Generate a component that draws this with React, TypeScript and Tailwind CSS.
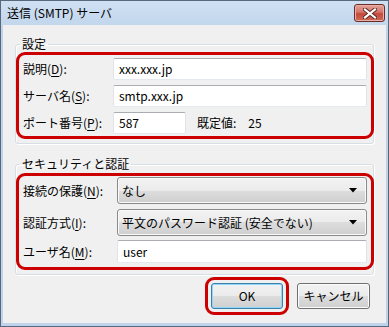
import React from "react";

const font = "font-['Noto_Sans_CJK_JP','Noto_Sans',sans-serif]";

function Mn({ label, k, rest = "" }: { label: string; k: string; rest?: string }) {
  return (
    <span>
      {label}(<span className="underline underline-offset-2">{k}</span>):{rest}
    </span>
  );
}

function TextBox({ value, className = "" }: { value: string; className?: string }) {
  return (
    <div
      className={`flex h-[22px] items-center rounded-[2px] border border-[#e2e3ea] border-t-[#abadb3] border-b-[#e3e9ef] bg-white pl-[5px] text-[12px] text-black ${className}`}
    >
      {value}
    </div>
  );
}

function Combo({ value }: { value: string }) {
  return (
    <div className="flex h-[27px] flex-1 items-center justify-between rounded-[3px] border border-[#8a8a8a] bg-[linear-gradient(#f2f2f2_0%,#ebebeb_50%,#dddddd_50%,#cfcfcf_100%)] pl-[4px] pr-[9px] text-[12px] text-black shadow-[inset_0_0_0_1px_#fafafa]">
      <span>{value}</span>
      <svg width="8" height="5" viewBox="0 0 8 5">
        <path d="M0 0H8L4 4.5Z" fill="#000" />
      </svg>
    </div>
  );
}

function Group({ title, children }: { title: string; children: React.ReactNode }) {
  return (
    <fieldset className="mx-[12px] rounded-[3px] border border-[#d5dfe5] pb-[4px] shadow-[inset_1px_1px_0_#fff,1px_1px_0_#fff]">
      <legend className="ml-[4px] px-[2px] text-[12px] leading-[16px] text-black">{title}</legend>
      {children}
    </fieldset>
  );
}

function Row({ label, children, w }: { label: React.ReactNode; children: React.ReactNode; w: string }) {
  return (
    <div className="flex items-center">
      <div className={`${w} shrink-0 text-[12px] text-black`}>{label}</div>
      {children}
    </div>
  );
}

export default function App() {
  return (
    <div className={`h-[327px] w-[389px] ${font}`}>
      <div className="flex h-[327px] w-[389px] flex-col border border-[#56687a] bg-[linear-gradient(#cfe0f2,#bfd4eb_30px,#bfd4eb)]">
        {/* title bar */}
        <div className="flex h-[24px] shrink-0 items-start justify-between">
          <div className="pl-[6px] pt-[5px] text-[12px] leading-[14px] text-black">送信 (SMTP) サーバ</div>
          <button className="mr-[3px] mt-[3px] flex h-[18px] w-[31px] items-center justify-center rounded-[3px] border border-[#6b2b26] bg-[linear-gradient(#e3a49d_0%,#d37467_45%,#c44a3c_55%,#cf6a57_100%)] shadow-[inset_0_0_0_1px_#eab0a8]">
            <svg width="14" height="11" viewBox="0 0 14 11">
              <path d="M2 1.5L12 9.5M12 1.5L2 9.5" stroke="#5a2420" strokeWidth="4" strokeLinecap="square" />
              <path d="M2 1.5L12 9.5M12 1.5L2 9.5" stroke="#fff" strokeWidth="2.2" strokeLinecap="square" />
            </svg>
          </button>
        </div>

        {/* client */}
        <div className="mx-[2px] mb-[3px] flex flex-1 flex-col bg-[#f0f0f0] pt-[11px]">
          <Group title="設定">
            <div className="-mr-[1px] flex flex-col gap-[5px] rounded-[9px] border-[3px] border-[#cc0000] pb-[2px] pl-[4px] pr-[4px] pt-[3px]">
              <Row w="w-[90px]" label={<Mn label="説明" k="D" />}>
                <TextBox value="xxx.xxx.jp" className="flex-1" />
              </Row>
              <Row w="w-[90px]" label={<Mn label="サーバ名" k="S" />}>
                <TextBox value="smtp.xxx.jp" className="flex-1" />
              </Row>
              <Row w="w-[90px]" label={<Mn label="ポート番号" k="P" />}>
                <TextBox value="587" className="w-[73px]" />
                <span className="ml-[11px] text-[12px] text-black">既定値:</span>
                <span className="ml-[12px] text-[12px] text-black">25</span>
              </Row>
            </div>
          </Group>

          <div className="h-[12px]" />

          <Group title="セキュリティと認証">
            <div className="-mr-[1px] mt-[1px] flex flex-col rounded-[9px] border-[3px] border-[#cc0000] pb-[4px] pl-[4px] pr-[4px] pt-[1px]">
              <Row w="w-[94px]" label={<Mn label="接続の保護" k="N" />}>
                <Combo value="なし" />
              </Row>
              <div className="h-[5px]" />
              <Row w="w-[94px]" label={<Mn label="認証方式" k="I" />}>
                <Combo value="平文のパスワード認証 (安全でない)" />
              </Row>
              <div className="h-[4px]" />
              <Row w="w-[94px]" label={<Mn label="ユーザ名" k="M" />}>
                <TextBox value="user" className="h-[23px] flex-1 border-[#e2e3ea] border-t-[#abadb3] pl-[3px]" />
              </Row>
            </div>
          </Group>

          <div className="mt-[2px] flex items-center justify-end gap-[8px] pr-[16px]">
            <div className="rounded-[9px] border-[3px] border-[#cc0000] p-[3px]">
              <button className="flex h-[26px] w-[72px] items-center justify-center rounded-[3px] border border-[#3c7fb1] bg-[linear-gradient(#f2f2f2_0%,#ebebeb_50%,#dddddd_50%,#cfcfcf_100%)] text-[12px] text-black shadow-[inset_0_0_0_1px_#8fd8f5]">
                OK
              </button>
            </div>
            <button className="flex h-[26px] w-[73px] items-center justify-center rounded-[3px] border border-[#707070] bg-[linear-gradient(#f2f2f2_0%,#ebebeb_50%,#dddddd_50%,#cfcfcf_100%)] text-[12px] text-black shadow-[inset_0_0_0_1px_#fcfcfc]">
              キャンセル
            </button>
          </div>
        </div>
      </div>
    </div>
  );
}
